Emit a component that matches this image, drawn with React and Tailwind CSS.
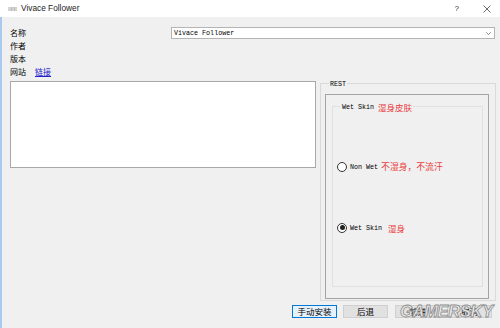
import React from 'react';

const cjk = "font-['Noto_Sans_CJK_SC',sans-serif]";
const mono = "font-['Liberation_Mono',monospace]";

function Radio({ checked }) {
  return (
    <span className="w-[10px] h-[10px] rounded-full border border-[#333] bg-white flex items-center justify-center shrink-0">
      {checked && <span className="w-[5px] h-[5px] rounded-full bg-[#222]"></span>}
    </span>
  );
}

function Btn({ children, focused, className = '' }) {
  return (
    <div
      className={`w-[45px] h-[13px] flex items-center justify-center text-[8.5px] leading-none text-black ${cjk} border ${
        focused ? 'border-[#0078d7] bg-[#e5f1fb]' : 'border-[#d0d0d0] bg-[#e1e1e1]'
      } ${className}`}
    >
      {children}
    </div>
  );
}

export default function App() {
  return (
    <div className="w-[500px] h-[328px] overflow-hidden bg-[#f0f0f0] relative">
      {/* title bar */}
      <div className="h-[17px] bg-white flex items-center pl-[8px]">
        <svg width="9" height="4" viewBox="0 0 9 4" className="shrink-0">
          <rect x="0" y="0" width="9" height="4" fill="#d4d4d4" />
          <rect x="3" y="0" width="1" height="4" fill="#bcbcbc" />
          <rect x="6" y="0" width="1" height="4" fill="#bcbcbc" />
        </svg>
        <span className="ml-[4px] text-[8.3px] leading-none text-[#222] font-['Liberation_Sans',sans-serif]">Vivace Follower</span>
        <div className="flex-1"></div>
        <span className="text-[8px] leading-none text-[#333] font-['Liberation_Sans',sans-serif] mr-[24px]">?</span>
        <svg width="8" height="8" viewBox="0 0 8 8" className="mr-[9px]">
          <path d="M0.5 0.5 L7.5 7.5 M7.5 0.5 L0.5 7.5" stroke="#444" strokeWidth="0.8" />
        </svg>
      </div>

      {/* body */}
      <div className="h-[311px] border-l-2 border-[#a9c9ef] pl-[8px] flex flex-col">
        <div className={`mt-[10px] h-[12px] flex items-center text-[8px] leading-none ${cjk}`}>
          <span className="w-[161px]">名称</span>
          <div className="w-[324px] h-[12px] bg-white border border-[#b4b4b4] flex items-center pl-[2px] pr-[3px]">
            <span className={`text-[6.7px] leading-none text-black ${mono}`}>Vivace Follower</span>
            <div className="flex-1"></div>
            <svg width="5" height="3" viewBox="0 0 5 3">
              <path d="M0.3 0.3 L2.5 2.6 L4.7 0.3" fill="none" stroke="#555" strokeWidth="0.7" />
            </svg>
          </div>
        </div>
        <div className={`h-[13.3px] flex items-center text-[8px] leading-none ${cjk}`}>作者</div>
        <div className={`h-[13.3px] flex items-center text-[8px] leading-none ${cjk}`}>版本</div>
        <div className={`h-[13.4px] flex items-center text-[8px] leading-none ${cjk}`}>
          <span className="w-[25px]">网站</span>
          <span className="text-[#2222cc] underline">链接</span>
        </div>

        <div className="flex items-start gap-[4px]">
          <div className="mt-[2px] w-[306px] h-[87px] bg-white border border-[#a8a8a8]"></div>

          <fieldset className="w-[176px] h-[222px] border border-[#dadada] pl-[4px] pr-[6px] pt-[5px]">
            <legend className={`ml-[4px] px-[1px] text-[6.7px] leading-[10px] text-black ${mono}`}>REST</legend>
            <div className="w-[164px] h-[205px] border border-[#a4a4a4] pt-[7px] pl-[6px]">
              <fieldset className="w-[151px] h-[185px] border border-[#e0e0e0] pl-[4px]">
                <legend className="ml-[4px] px-[1px] h-[10px] flex items-center gap-[4px] leading-none">
                  <span className={`text-[6.7px] text-black ${mono}`}>Wet Skin</span>
                  <span className={`text-[8.5px] text-[#ea3d3d] ${cjk}`}>湿身皮肤</span>
                </legend>
                <div className="mt-[50px] h-[10px] flex items-center">
                  <Radio />
                  <span className={`ml-[3px] text-[6.7px] leading-none text-black ${mono}`}>Non Wet</span>
                  <span className={`ml-[3px] text-[8.8px] leading-none text-[#ea3d3d] ${cjk}`}>不湿身，不流汗</span>
                </div>
                <div className="mt-[51px] h-[10px] flex items-center">
                  <Radio checked />
                  <span className={`ml-[3px] text-[6.7px] leading-none text-black ${mono}`}>Wet Skin</span>
                  <span className={`ml-[6px] text-[8.5px] leading-none text-[#ea3d3d] ${cjk}`}>湿身</span>
                </div>
              </fieldset>
            </div>
          </fieldset>
        </div>

        <div className="mt-[4px] flex justify-end pr-[8px]">
          <Btn focused>手动安装</Btn>
          <Btn className="ml-[6px]">后退</Btn>
          <Btn className="ml-[7px]">前进</Btn>
          <Btn className="ml-[7px]">取消</Btn>
        </div>
      </div>

      {/* watermark */}
      <div className="absolute left-[400px] top-[303px] text-[16.5px] leading-none italic font-black text-[#ececec] font-['Liberation_Sans',sans-serif] [-webkit-text-stroke:0.8px_#8c8c8c] tracking-[-0.3px] pointer-events-none select-none">
        GAMERSKY
      </div>
    </div>
  );
}
